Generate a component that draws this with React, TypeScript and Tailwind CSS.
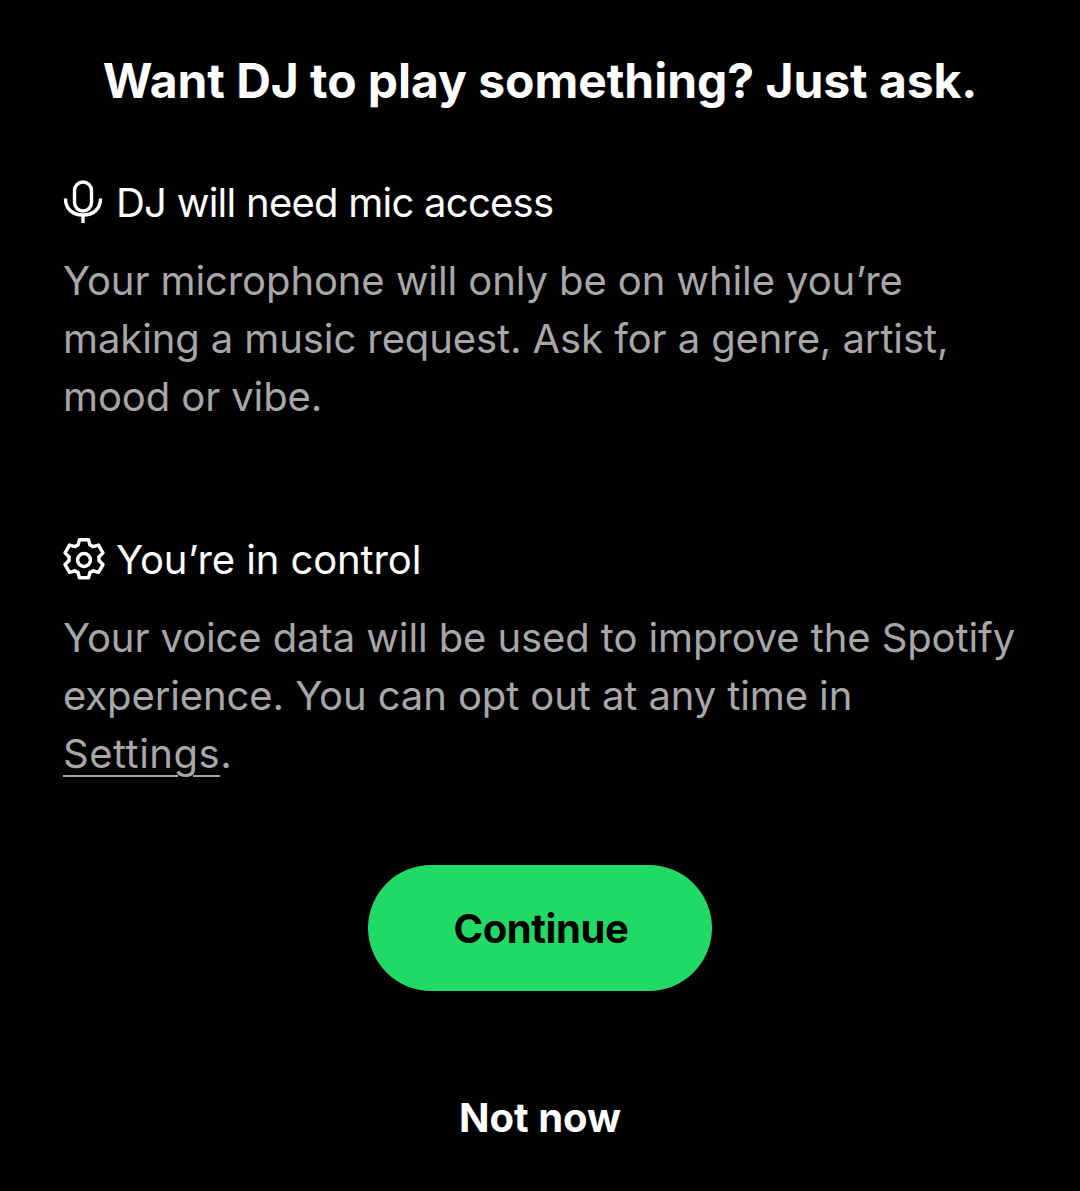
import React from "react";

const MicIcon = () => (
  <svg width="42" height="44" viewBox="0 0 42 44" fill="none" stroke="#fff" strokeWidth="3.4" className="shrink-0 -translate-y-px">
    <rect x="12.5" y="2" width="17" height="29" rx="8.5" />
    <path d="M3.5 18.5c0 11 7.5 16.5 17.500 16.500s17.500-5.500 17.500-16.500" />
    <path d="M21 35v8" />
  </svg>
);

// Cog with eight rounded teeth, same as the reference
const GearIcon = () => (
  <svg width="44" height="44" viewBox="1.8 1.8 20.4 20.4" fill="none" stroke="#fff" strokeWidth="1.6" strokeLinejoin="round" className="shrink-0">
    <circle cx="12" cy="12" r="3" />
    <path d="M9.9 2.600h4.200l.7 2.500c.5.200.9.400 1.300.7l2.600-.7 2.100 3.600-1.900 1.900c.1.500.1 1.100 0 1.600l1.900 1.900-2.100 3.600-2.600-.7c-.4.300-.8.500-1.300.7l-.7 2.500H9.900l-.7-2.500c-.5-.2-.9-.4-1.300-.7l-2.600.7-2.100-3.600 1.900-1.900c-.1-.5-.1-1.100 0-1.600L3.200 8.700l2.100-3.600 2.600.7c.4-.3.800-.5 1.300-.7z" />
  </svg>
);

export default function App() {
  return (
    <div className="flex h-[1191px] w-[1080px] flex-col overflow-hidden bg-black px-16 font-['Inter',sans-serif]">
      <h1 className="-mx-10 mt-[51px] text-center text-[48px] leading-[60px] font-bold tracking-[-0.05px] whitespace-nowrap text-white">
        Want DJ to play something? Just ask.
      </h1>

      <div className="-ml-0.5 mt-[63px] flex h-[58px] items-center gap-[12px] text-[40px] tracking-[-0.75px] text-white">
        <MicIcon />
        <span>DJ will need mic access</span>
      </div>
      <p className="-ml-px mt-[20px] text-[40px] leading-[58px] tracking-[-0.1px] whitespace-nowrap text-[#a7a7a7]">
        Your microphone will only be on while you’re
        <br />
        making a music request. Ask for a genre, artist,
        <br />
        mood or vibe.
      </p>

      <div className="-ml-0.5 mt-[105px] flex h-[58px] items-center gap-[10px] text-[40px] tracking-[-0.1px] text-white">
        <GearIcon />
        <span>You’re in control</span>
      </div>
      <p className="-ml-px mt-[20px] text-[40px] leading-[58px] tracking-[-0.1px] whitespace-nowrap text-[#a7a7a7]">
        Your voice data will be used to improve the Spotify
        <br />
        experience. You can opt out at any time in
        <br />
        <span className="tracking-[0.5px] underline decoration-2 underline-offset-[7px]">Settings</span>.
      </p>

      <button className="mx-auto mt-[82px] h-[126px] w-[344px] shrink-0 rounded-full bg-[#21da66] pt-0.5 pl-0.5 text-[40px] font-bold tracking-[-0.4px] text-black">
        Continue
      </button>
      <button className="mx-auto mt-[98px] text-[40px] leading-[58px] font-bold text-white">
        Not now
      </button>
    </div>
  );
}
